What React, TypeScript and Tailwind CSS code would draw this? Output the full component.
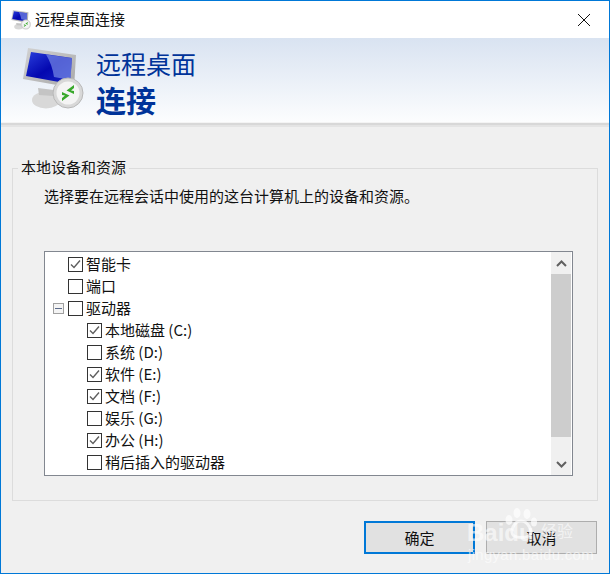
import React from 'react';

const font = { fontFamily: '"Noto Sans CJK SC", "Liberation Sans", sans-serif' };

function Monitor({ small = false }: { small?: boolean }) {
  const scr = small ? 'scrS' : 'scr';
  const bez = small ? 'bezS' : 'bez';
  return (
    <svg width={small ? 20 : 62} height={small ? 20 : 62} viewBox="0 0 62 62">
      <defs>
        <linearGradient id={scr} x1="0" y1="0" x2="1" y2="1">
          <stop offset="0" stopColor="#2a3fdc" />
          <stop offset="0.5" stopColor="#0408b0" />
          <stop offset="1" stopColor="#1a28c4" />
        </linearGradient>
        <linearGradient id={bez} x1="0" y1="0" x2="1" y2="1">
          <stop offset="0" stopColor="#d2d2d2" />
          <stop offset="1" stopColor="#a8a8a8" />
        </linearGradient>
      </defs>
      <ellipse cx="24" cy="52" rx="14" ry="8.5" fill="#d8d8d8" />
      <path d="M16 40 L32 42 L32 48 L17 47 Z" fill="#c4c4c4" />
      <path d="M6 0 L54 7 L52 40 L1 31 Z" style={{ fill: `url(#${bez})` }} />
      <path d="M9 4 L50 10 L48 36 L4 28 Z" style={{ fill: `url(#${scr})` }} />
      <path d="M24 6.5 L50 10 L48.5 32 L32 29 Q30 16 24 6.5 Z" fill="#7f94ea" opacity="0.65" />
      <circle cx="46" cy="45" r="15" fill="#d8d8d8" stroke="#b8b8b8" />
      <circle cx="46" cy="45" r="11.5" fill="#f4f4f4" />
      <path d="M52 37 L44.5 42.5 L52 46 L52 43 L49 42.5 L52 40 Z" fill="#38a82a" />
      <path d="M40 53 L47.5 47.5 L40 44 L40 47 L43 47.5 L40 50 Z" fill="#38a82a" />
    </svg>
  );
}

function Check({ checked }: { checked: boolean }) {
  return (
    <span className="w-[15px] h-[15px] shrink-0 border border-[#333] bg-white flex items-center justify-center">
      {checked && (
        <svg width="13" height="13" viewBox="0 0 13 13">
          <path d="M2 6.5 L5 9.5 L11 2.5" fill="none" stroke="#5e5e5e" strokeWidth="1.4" />
        </svg>
      )}
    </span>
  );
}

type Row = { label: string; checked: boolean; level: number; expander?: boolean };

const rows: Row[] = [
  { label: '智能卡', checked: true, level: 0 },
  { label: '端口', checked: false, level: 0 },
  { label: '驱动器', checked: false, level: 0, expander: true },
  { label: '本地磁盘 (C:)', checked: true, level: 1 },
  { label: '系统 (D:)', checked: false, level: 1 },
  { label: '软件 (E:)', checked: true, level: 1 },
  { label: '文档 (F:)', checked: true, level: 1 },
  { label: '娱乐 (G:)', checked: false, level: 1 },
  { label: '办公 (H:)', checked: true, level: 1 },
  { label: '稍后插入的驱动器', checked: false, level: 1 },
];

export default function App() {
  return (
    <div
      className="relative w-[610px] h-[574px] flex flex-col bg-[#f0f0f0] border border-[#0078d7] overflow-hidden text-[15px] text-[#111]"
      style={font}
    >
      {/* title bar */}
      <div className="h-[37px] shrink-0 bg-white flex items-center pl-[10px] pr-[18px]">
        <Monitor small />
        <span className="ml-[4px] leading-none mt-[-2px]">远程桌面连接</span>
        <svg className="ml-auto" width="14" height="14" viewBox="0 0 14 14">
          <path d="M1 1 L13 13 M13 1 L1 13" stroke="#111" strokeWidth="1" fill="none" />
        </svg>
      </div>

      {/* banner */}
      <div className="h-[84px] shrink-0 flex bg-gradient-to-b from-[#d9e3f1] to-[#fcfdfe] pl-[21px] pt-[10px]">
        <Monitor />
        <div className="ml-[12px] flex flex-col text-[#003399]">
          <span className="text-[25px] leading-[32px] mt-[-1px]">远程桌面</span>
          <span className="text-[30px] leading-[38px] font-bold mt-[1px]">连接</span>
        </div>
      </div>
      <div className="h-[5px] shrink-0 bg-[#d8d8d8] border-t border-[#f4f4f4] border-b-2 border-b-[#e4e4e4]" />

      {/* group box */}
      <fieldset className="mt-[30px] mx-[11px] h-[344px] border border-[#dcdcdc] pl-[31px] pr-[23px] min-w-0">
        <legend className="ml-[-26px] px-[3px] pb-[2px] leading-[20px]">本地设备和资源</legend>
        <p className="mt-[7px] leading-[20px]">选择要在远程会话中使用的这台计算机上的设备和资源。</p>

        <div className="mt-[45px] w-[529px] h-[225px] border border-[#828790] bg-white flex">
          <ul className="flex-1 pt-[1px]">
            {rows.map((r) => (
              <li key={r.label} className="h-[22px] flex items-center">
                <span className={r.level ? 'w-[42px] shrink-0' : 'w-[23px] shrink-0 flex justify-start pl-[8px]'}>
                  {r.expander && (
                    <span className="w-[11px] h-[11px] border border-[#a0a0a0] bg-[#f4f4f4] flex items-center justify-center">
                      <span className="w-[7px] h-px bg-[#5a6a8a]" />
                    </span>
                  )}
                </span>
                <Check checked={r.checked} />
                <span className="ml-[3px] leading-none mt-[-1px]">{r.label}</span>
              </li>
            ))}
          </ul>
          <div className="w-[20px] mr-px shrink-0 bg-[#f0f0f0] flex flex-col">
            <div className="h-[22px] flex items-center justify-center">
              <svg width="11" height="7" viewBox="0 0 11 7">
                <path d="M1 6 L5.5 1.5 L10 6" fill="none" stroke="#606060" strokeWidth="2" />
              </svg>
            </div>
            <div className="h-[163px] bg-[#cdcdcd]" />
            <div className="flex-1 flex items-end justify-center pb-[7px]">
              <svg width="11" height="7" viewBox="0 0 11 7">
                <path d="M1 1 L5.5 5.5 L10 1" fill="none" stroke="#606060" strokeWidth="2" />
              </svg>
            </div>
          </div>
        </div>
      </fieldset>

      {/* buttons */}
      <div className="mt-[20px] mr-[12px] flex justify-end gap-[11px]">
        <button className="w-[111px] h-[33px] bg-[#e1e1e1] border-2 border-[#0078d7] leading-none">确定</button>
        <button className="w-[111px] h-[33px] bg-[#e1e1e1] border border-[#adadad] leading-none">取消</button>
      </div>

      {/* watermark */}
      <div className="absolute left-[502px] top-[507px]">
        <svg width="34" height="32" viewBox="0 0 34 32" fill="#fff" opacity="0.7">
          <ellipse cx="6" cy="12" rx="3.5" ry="5" />
          <ellipse cx="14" cy="5" rx="3.5" ry="5" />
          <ellipse cx="24" cy="6" rx="3.5" ry="5" />
          <ellipse cx="31" cy="14" rx="3" ry="4.5" />
          <path d="M18 13 C11 13 6 24 11 28 C15 30 22 30 26 28 C31 24 25 13 18 13 Z" fill="none" stroke="#fff" strokeWidth="3" />
        </svg>
      </div>
      <span
        className="absolute left-[466px] top-[520px] text-[24px] leading-none font-bold text-white/60"
        style={{ fontFamily: '"Liberation Sans", sans-serif' }}
      >
        Baidu
      </span>
      <span className="absolute left-[540px] top-[521px] text-[16px] leading-none text-white/60">经验</span>
      <span
        className="absolute left-[467px] top-[546px] text-[15px] tracking-[0.3px] leading-none text-white/60"
        style={{ fontFamily: '"Liberation Sans", sans-serif' }}
      >
        jingyan.baidu.com
      </span>
    </div>
  );
}
